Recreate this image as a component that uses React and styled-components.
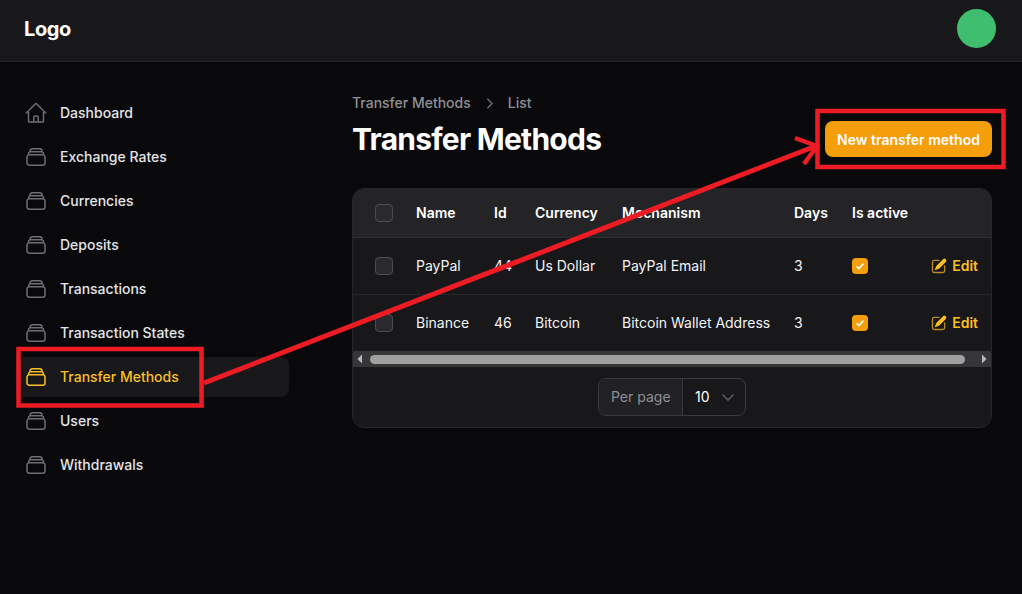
import styled, { createGlobalStyle } from "styled-components";

const NAV_ITEMS = [
  "Dashboard",
  "Exchange Rates",
  "Currencies",
  "Deposits",
  "Transactions",
  "Transaction States",
  "Transfer Methods",
  "Users",
  "Withdrawals",
];

const ROWS = [
  { name: "PayPal", id: 44, currency: "Us Dollar", mechanism: "PayPal Email", days: 3 },
  { name: "Binance", id: 46, currency: "Bitcoin", mechanism: "Bitcoin Wallet Address", days: 3 },
];

const COLUMN_WIDTHS = [52, 78, 41, 87, 172, 58, 80, 72];

const HomeIcon = () => (
  <NavSvg viewBox="0 0 24 24">
    <path d="M2.25 12l8.954-8.955c.44-.439 1.152-.439 1.591 0L21.75 12M4.5 9.75v10.125c0 .621.504 1.125 1.125 1.125H9.75v-4.875c0-.621.504-1.125 1.125-1.125h2.25c.621 0 1.125.504 1.125 1.125V21h4.125c.621 0 1.125-.504 1.125-1.125V9.75M8.25 21h8.25" />
  </NavSvg>
);

const StackIcon = () => (
  <NavSvg viewBox="0 0 24 24">
    <path d="M6 6.878V6a2.25 2.25 0 012.25-2.25h7.5A2.25 2.25 0 0118 6v.878m-12 0c.235-.083.487-.128.75-.128h10.5c.263 0 .515.045.75.128m-12 0A2.25 2.25 0 004.5 9v.878m13.5-3A2.25 2.25 0 0119.5 9v.878m0 0a2.246 2.246 0 00-.75-.128H5.25c-.263 0-.515.045-.75.128m15 0A2.25 2.25 0 0121 12v6a2.25 2.25 0 01-2.25 2.25H5.25A2.25 2.25 0 013 18v-6c0-.98.626-1.813 1.5-2.122" />
  </NavSvg>
);

const EditIcon = () => (
  <EditSvg viewBox="0 0 20 20">
    <path d="M5.433 13.917l1.262-3.155A4 4 0 017.58 9.42l6.92-6.918a2.121 2.121 0 013 3l-6.92 6.918c-.383.383-.84.685-1.343.886l-3.154 1.262a.5.5 0 01-.65-.65z" />
    <EditFrame d="M3.5 5.75c0-.69.56-1.25 1.25-1.25H10A.75.75 0 0010 3H4.75A2.75 2.75 0 002 5.75v9.5A2.75 2.75 0 004.75 18h9.5A2.75 2.75 0 0017 15.25V10a.75.75 0 00-1.5 0v5.25c0 .69-.56 1.25-1.25 1.25h-9.5c-.69 0-1.25-.56-1.25-1.25v-9.5z" />
  </EditSvg>
);

const App = () => {
  return (
    <Page>
      <GlobalStyle />
      <Header>
        <Logo>Logo</Logo>
        <Avatar />
      </Header>
      <Body>
        <Sidebar>
          {NAV_ITEMS.map((item) => (
            <NavItem key={item} $active={item === "Transfer Methods"}>
              {item === "Dashboard" ? <HomeIcon /> : <StackIcon />}
              {item}
            </NavItem>
          ))}
        </Sidebar>
        <Main>
          <TitleRow>
            <div>
              <Breadcrumbs>
                Transfer Methods
                <CrumbChevron viewBox="0 0 20 20">
                  <path d="M7.5 4.5L13 10l-5.5 5.5" />
                </CrumbChevron>
                List
              </Breadcrumbs>
              <Title>Transfer Methods</Title>
            </div>
            <PrimaryButton>New transfer method</PrimaryButton>
          </TitleRow>
          <Card>
            <Table>
              <colgroup>
                {COLUMN_WIDTHS.map((width, i) => (
                  <col key={i} style={{ width }} />
                ))}
              </colgroup>
              <thead>
                <HeadRow>
                  <HeadCheckCell as="th">
                    <Checkbox />
                  </HeadCheckCell>
                  <HeadCell>Name</HeadCell>
                  <HeadCell>Id</HeadCell>
                  <HeadCell>Currency</HeadCell>
                  <HeadCell>Mechanism</HeadCell>
                  <HeadCell>Days</HeadCell>
                  <HeadCell>Is active</HeadCell>
                  <HeadCell />
                </HeadRow>
              </thead>
              <tbody>
                {ROWS.map((row) => (
                  <Row key={row.id}>
                    <CheckCell>
                      <Checkbox />
                    </CheckCell>
                    <Cell>{row.name}</Cell>
                    <Cell>{row.id}</Cell>
                    <Cell>{row.currency}</Cell>
                    <Cell>{row.mechanism}</Cell>
                    <Cell>{row.days}</Cell>
                    <Cell>
                      <ActiveBox>
                        <svg viewBox="0 0 16 16" width="12" height="12">
                          <path d="M3.5 8.5l3 3 6-6.5" fill="none" stroke="#fff" strokeWidth="2.2" />
                        </svg>
                      </ActiveBox>
                    </Cell>
                    <ActionCell>
                      <EditLink>
                        <EditIcon />
                        Edit
                      </EditLink>
                    </ActionCell>
                  </Row>
                ))}
              </tbody>
            </Table>
            <ScrollBar>
              <ScrollArrow viewBox="0 0 6 10">
                <path d="M5 0.5v9L0.5 5z" />
              </ScrollArrow>
              <ScrollThumb />
              <ScrollArrow viewBox="0 0 6 10">
                <path d="M1 0.5v9L5.5 5z" />
              </ScrollArrow>
            </ScrollBar>
            <Footer>
              <PerPage>
                <PerPageLabel>Per page</PerPageLabel>
                <PerPageValue>
                  10
                  <SelectChevron viewBox="0 0 20 20">
                    <path d="M4.5 7.5L10 13l5.5-5.5" />
                  </SelectChevron>
                </PerPageValue>
              </PerPage>
            </Footer>
          </Card>
        </Main>
      </Body>
      <Annotations viewBox="0 0 1022 594">
        <rect x="18.5" y="349" width="183" height="56.5" />
        <rect x="817.5" y="111" width="186" height="56" />
        <ArrowLine d="M204 383L816 146" />
        <path d="M795 138L817 146L804 164" />
      </Annotations>
    </Page>
  );
};

export default App;

const GlobalStyle = createGlobalStyle`
  html, body {
    margin: 0;
    height: 100%;
    overflow: hidden;
    background: #09090b;
  }
  * {
    box-sizing: border-box;
  }
`;

const Page = styled.div`
  position: relative;
  height: 594px;
  background: #09090b;
  color: #ffffff;
  font-family: Inter, "Liberation Sans", sans-serif;
  font-size: 14px;
  line-height: 20px;
`;

const Header = styled.header`
  display: flex;
  align-items: center;
  justify-content: space-between;
  height: 62px;
  padding: 0 26px 4px 24px;
  background: #18181b;
  border-bottom: 1px solid #27272a;
`;

const Logo = styled.div`
  font-size: 20px;
  font-weight: 700;
  letter-spacing: -0.4px;
`;

const Avatar = styled.div`
  width: 39px;
  height: 39px;
  border-radius: 50%;
  background: #3fbe6f;
`;

const Body = styled.div`
  display: flex;
`;

const Sidebar = styled.nav`
  display: flex;
  flex: none;
  flex-direction: column;
  gap: 4px;
  width: 305px;
  padding: 31px 16px;
`;

const NavItem = styled.a`
  display: flex;
  align-items: center;
  gap: 12px;
  height: 40px;
  padding: 0 8px;
  border-radius: 8px;
  font-weight: 500;
  color: ${(p) => (p.$active ? "#fbbf24" : "#e4e4e7")};
  background: ${(p) => (p.$active ? "#18181b" : "transparent")};

  svg {
    stroke: ${(p) => (p.$active ? "#fbbf24" : "#6e6e75")};
  }
`;

const NavSvg = styled.svg`
  width: 24px;
  height: 24px;
  fill: none;
  stroke-width: 1.5;
  stroke-linecap: round;
  stroke-linejoin: round;
`;

const Main = styled.main`
  flex: 1;
  min-width: 0;
  padding: 31px 30px 0 47px;
`;

const TitleRow = styled.div`
  display: flex;
  align-items: flex-end;
  justify-content: space-between;
  margin-bottom: 31px;
`;

const Breadcrumbs = styled.div`
  display: flex;
  align-items: center;
  gap: 10px;
  margin-bottom: 8px;
  font-weight: 500;
  color: #8f8f96;
`;

const CrumbChevron = styled.svg`
  width: 17px;
  height: 17px;
  fill: none;
  stroke: #71717a;
  stroke-width: 1.5;
`;

const Title = styled.h1`
  margin: 0;
  font-size: 30px;
  line-height: 36px;
  font-weight: 700;
  letter-spacing: -0.75px;
`;

const PrimaryButton = styled.button`
  height: 36px;
  width: 167px;
  padding: 0;
  border: none;
  border-radius: 8px;
  background: #f59e0b;
  color: #ffffff;
  font-family: inherit;
  font-size: 14px;
  font-weight: 600;
`;

const Card = styled.div`
  height: 240px;
  border-radius: 12px;
  border: 1px solid #27272a;
  background: #18181b;
  overflow: hidden;
`;

const Table = styled.table`
  width: 640px;
  margin-left: -1px;
  margin-top: -1px;
  table-layout: fixed;
  border-collapse: collapse;
`;

const HeadRow = styled.tr`
  height: 49px;
  background: #242427;
  border-bottom: 1px solid #2e2e32;
`;

const HeadCell = styled.th`
  padding: 2px 12px 0;
  text-align: left;
  font-weight: 600;
  white-space: nowrap;
`;

const Row = styled.tr`
  height: 57px;
  border-bottom: 1px solid #26262a;

  &:last-child {
    border-bottom: none;
  }
`;

const Cell = styled.td`
  padding: 0 12px;
  white-space: nowrap;
  color: #f4f4f5;
`;

const CheckCell = styled.td`
  padding: 0 0 0 23px;
  font-weight: normal;
`;

const HeadCheckCell = styled(CheckCell)`
  padding-top: 2px;
`;

const ActionCell = styled(Cell)`
  padding: 0 14px 0 0;
`;

const Checkbox = styled.div`
  width: 18px;
  height: 18px;
  border-radius: 4px;
  border: 1px solid #4b4b50;
  background: #2a2a2e;
`;

const ActiveBox = styled.div`
  display: flex;
  align-items: center;
  justify-content: center;
  width: 16px;
  height: 16px;
  border-radius: 4px;
  background: #f59e0b;
`;

const EditLink = styled.a`
  display: flex;
  align-items: center;
  justify-content: flex-end;
  gap: 4px;
  font-weight: 600;
  color: #fbbf24;
`;

const EditSvg = styled.svg`
  width: 18px;
  height: 18px;
  fill: #fbbf24;
`;

const EditFrame = styled.path`
  opacity: 0.7;
`;

const ScrollBar = styled.div`
  display: flex;
  align-items: center;
  justify-content: space-between;
  height: 16px;
  margin: 0 -1px;
  padding: 0 5px;
  background: #363638;
`;

const ScrollArrow = styled.svg`
  width: 6px;
  height: 10px;
  fill: #b8b8b8;
`;

const ScrollThumb = styled.div`
  width: 595px;
  height: 9px;
  margin-right: 10px;
  border-radius: 5px;
  background: #a0a0a0;
`;

const Footer = styled.div`
  display: flex;
  justify-content: center;
  padding-top: 11px;
`;

const PerPage = styled.div`
  display: flex;
  height: 38px;
  width: 148px;
  border: 1px solid #3a3a3f;
  border-radius: 8px;
  overflow: hidden;
`;

const PerPageLabel = styled.div`
  display: flex;
  align-items: center;
  width: 84px;
  padding-left: 12px;
  background: #212124;
  border-right: 1px solid #3a3a3f;
  color: #8f8f96;
`;

const PerPageValue = styled.div`
  display: flex;
  align-items: center;
  flex: 1;
  gap: 8px;
  padding-left: 12px;
`;

const SelectChevron = styled.svg`
  width: 20px;
  height: 20px;
  fill: none;
  stroke: #55555c;
  stroke-width: 1.6;
`;

const ArrowLine = styled.path`
  stroke-width: 5;
`;

const Annotations = styled.svg`
  position: absolute;
  top: 0;
  left: 0;
  width: 1022px;
  height: 594px;
  fill: none;
  stroke: #ed1c24;
  stroke-width: 4.5;
  pointer-events: none;
`;
